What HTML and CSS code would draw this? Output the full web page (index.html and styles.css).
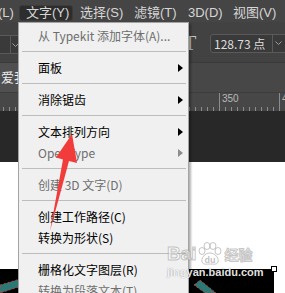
FILE: index.html
```html
<!DOCTYPE html>
<html lang="zh-CN">
<head>
    <meta charset="UTF-8">
    <meta name="viewport" content="width=device-width, initial-scale=1.0">
    <title>文字菜单</title>
    <link rel="stylesheet" href="styles.css">
</head>
<body>
    <div class="workspace">
        <!-- Application menu bar -->
        <div class="menubar">
            <span class="menubar-item">图层(L)</span>
            <span class="menubar-item open">文字(Y)</span>
            <span class="menubar-item">选择(S)</span>
            <span class="menubar-item">滤镜(T)</span>
            <span class="menubar-item short">3D(D)</span>
            <span class="menubar-item">视图(V)</span>
        </div>

        <!-- Tool options bar -->
        <div class="options-bar">
            <div class="combo style-combo">
                <div class="combo-field"></div>
                <div class="combo-drop">
                    <svg width="7" height="4" viewBox="0 0 7 4"><polyline points="0.5,0.5 3.5,3.5 6.5,0.5" fill="none" stroke="#9c9c9c"/></svg>
                </div>
            </div>
            <div class="size-group">
                <span class="size-icon">T</span>
                <div class="combo size-combo">
                    <div class="combo-field">128.73 点</div>
                    <div class="combo-drop">
                        <svg width="7" height="4" viewBox="0 0 7 4"><polyline points="0.5,0.5 3.5,3.5 6.5,0.5" fill="none" stroke="#9c9c9c"/></svg>
                    </div>
                </div>
            </div>
        </div>

        <!-- Document tabs -->
        <div class="doc-tabs">
            <div class="doc-tab active">爱我中华.psd @ 100%</div>
        </div>

        <!-- Horizontal ruler -->
        <div class="ruler">
            <span class="ruler-mark">150</span>
            <span class="ruler-mark">200</span>
            <span class="ruler-mark">250</span>
            <span class="ruler-mark">300</span>
            <span class="ruler-mark">350</span>
            <span class="ruler-mark">400</span>
        </div>

        <div class="pasteboard"></div>

        <div class="canvas">
            <div class="layer-image">
                <svg width="274" height="24" viewBox="0 0 274 24">
                    <polygon points="0,16 20,10 22,17 0,24" fill="#2b7874" stroke="#e33" stroke-width="0.8" stroke-dasharray="2 2"/>
                    <polygon points="194,16 200,11 216,24 205,24" fill="#2b7874" stroke="#e33" stroke-width="0.8" stroke-dasharray="2 2"/>
                </svg>
                <span class="handle"></span>
            </div>
        </div>

        <!-- Open "文字" menu -->
        <div class="dropdown">
            <div class="item disabled">从 Typekit 添加字体(A)...</div>
            <div class="sep"></div>
            <div class="item sub">面板</div>
            <div class="sep"></div>
            <div class="item sub">消除锯齿</div>
            <div class="sep"></div>
            <div class="item sub">文本排列方向</div>
            <div class="item sub disabled">OpenType</div>
            <div class="sep"></div>
            <div class="item disabled">创建 3D 文字(D)</div>
            <div class="sep"></div>
            <div class="item">创建工作路径(C)</div>
            <div class="item">转换为形状(S)</div>
            <div class="sep"></div>
            <div class="item">栅格化文字图层(R)</div>
            <div class="item disabled">转换为段落文本(T)</div>
        </div>

        <!-- Red annotation arrow -->
        <svg class="annotation" width="285" height="293" viewBox="0 0 285 293">
            <polygon points="72,134 77,163 69,161 50,231 63,159.5 56,157.5" fill="#f23b3b"/>
        </svg>

        <!-- Site watermark -->
        <div class="watermark">
            <div class="wm-logo">
                <span>Bai</span>
                <svg width="26" height="24" viewBox="0 0 26 24">
                    <g fill="rgba(255,255,255,0.5)" stroke="rgba(150,150,150,0.55)">
                        <ellipse cx="5" cy="9" rx="3" ry="3.5"/>
                        <ellipse cx="10" cy="4" rx="3" ry="3.5"/>
                        <ellipse cx="16" cy="4" rx="3" ry="3.5"/>
                        <ellipse cx="21" cy="9" rx="3" ry="3.5"/>
                        <path d="M13 11 C7 11 4 17 5 20 C6 23 10 22 13 22 C16 22 20 23 21 20 C22 17 19 11 13 11 Z"/>
                    </g>
                    <text x="13" y="21" text-anchor="middle" font-family="Liberation Sans" font-weight="bold" font-size="9" fill="rgba(150,150,150,0.6)">du</text>
                </svg>
                <span class="wm-cn">经验</span>
            </div>
            <div class="wm-url">jingyan.baidu.com</div>
        </div>
    </div>
</body>
</html>
```

FILE: styles.css
```css
/* Reset and base styles */
* {
    box-sizing: border-box;
    margin: 0;
    padding: 0;
}

body {
    width: 285px;
    height: 293px;
    overflow: hidden;
    font-family: "Noto Sans CJK SC", "Noto Sans", sans-serif;
    background-color: #fff;
}

.workspace {
    position: relative;
    width: 285px;
    height: 293px;
    overflow: hidden;
}

/* Menu bar */
.menubar {
    display: flex;
    height: 22px;
    margin-left: -35px;
    background-color: #454545;
}

.menubar-item {
    flex: 0 0 54px;
    height: 16px;
    margin-top: 5px;
    padding: 0 0 0 6px;
    font-family: "Liberation Sans", "Noto Sans CJK SC", sans-serif;
    font-size: 13px;
    line-height: 14px;
    color: #d6d6d6;
    white-space: nowrap;
    border: 1px solid transparent;
    border-radius: 3px;
}

.menubar-item.short {
    flex-basis: 45px;
}

.menubar-item.open {
    background-color: #2d2d2d;
    border-color: #3b3b3b;
}

/* Options bar */
.options-bar {
    display: flex;
    align-items: center;
    height: 40px;
    background-color: #424242;
}

.combo {
    display: flex;
    height: 19px;
    background-color: #3a3a3a;
    border: 1px solid #5a5a5a;
    border-radius: 3px;
}

.combo-field {
    font-size: 12px;
    line-height: 17px;
    color: #dedede;
    padding-left: 3px;
    white-space: nowrap;
}

.combo-drop {
    display: flex;
    align-items: center;
    justify-content: center;
    border-left: 1px solid #5a5a5a;
}

.style-combo {
    margin-left: -22px;
    margin-top: 5px;
}

.style-combo .combo-field {
    width: 31px;
}

.style-combo .combo-drop {
    width: 16px;
    padding-right: 6px;
}

.size-group {
    display: flex;
    align-items: center;
    margin-left: auto;
    margin-right: -10px;
    margin-top: 2px;
}

.size-icon {
    width: 16px;
    margin-right: 12px;
    font-family: "Liberation Serif", serif;
    font-size: 21px;
    line-height: 20px;
    color: #c4c4c4;
    text-align: center;
}

.size-combo .combo-field {
    width: 61px;
}

.size-combo .combo-drop {
    width: 22px;
    padding-right: 10px;
}

/* Document tabs */
.doc-tabs {
    display: flex;
    height: 30px;
    background-color: #474747;
    border-top: 1px solid #3a3a3a;
}

.doc-tab {
    width: 160px;
    padding: 4px 0 0 1px;
    font-size: 13px;
    line-height: 20px;
    color: #ececec;
    white-space: nowrap;
}

.doc-tab.active {
    background-color: #505050;
}

/* Ruler */
.ruler {
    display: flex;
    height: 19px;
    margin-left: -21px;
    background-color: #474747;
    background-image: repeating-linear-gradient(to right, #8c8c8c 0 1px, transparent 1px 6px);
    background-size: 100% 4px;
    background-position: 0 bottom;
    background-repeat: no-repeat;
    border-top: 1px solid #3d3d3d;
}

.ruler-mark {
    flex: 0 0 60px;
    padding: 1px 0 0 2px;
    font-family: "Liberation Sans", sans-serif;
    font-size: 10px;
    line-height: 10px;
    color: #b8b8b8;
    border-left: 1px solid #8c8c8c;
}

.pasteboard {
    height: 51px;
    background-color: #282828;
}

/* Canvas */
.canvas {
    height: 131px;
    padding-top: 107px;
    background-color: #fff;
}

.layer-image {
    position: relative;
    width: 274px;
    height: 24px;
    background-color: #000;
}

.layer-image svg {
    display: block;
}

.handle {
    position: absolute;
    top: -3px;
    right: -3px;
    width: 6px;
    height: 6px;
    background-color: #fff;
    border: 1px solid #000;
}

/* Dropdown menu */
.dropdown {
    position: absolute;
    left: 18px;
    top: 22px;
    width: 171px;
    height: 300px;
    padding-top: 2px;
    background-color: #f0f0f0;
    border: 1px solid #a3a3a3;
    box-shadow: 2px 2px 2px rgba(0, 0, 0, 0.3);
}

.dropdown .item {
    display: flex;
    align-items: center;
    justify-content: space-between;
    height: 21px;
    padding: 0 5px 0 19px;
    font-size: 12px;
    color: #000;
    white-space: nowrap;
}

.dropdown .item.disabled {
    color: #6e6e6e;
}

.dropdown .item.sub::after {
    content: "";
    border-left: 5px solid #000;
    border-top: 4.5px solid transparent;
    border-bottom: 4.5px solid transparent;
}

.dropdown .item.sub.disabled::after {
    border-left-color: #8c8c8c;
}

.dropdown .sep {
    height: 1px;
    margin: 5px 2px 5px 3px;
    background-color: #bdbdbd;
}

/* Overlays */
.annotation {
    position: absolute;
    left: 0;
    top: 0;
}

.watermark {
    position: absolute;
    left: 167px;
    top: 242px;
}

.wm-logo {
    display: flex;
    align-items: center;
    font-family: "Liberation Sans", sans-serif;
    font-weight: bold;
    font-size: 19px;
    color: rgba(255, 255, 255, 0.5);
    -webkit-text-stroke: 1px rgba(150, 150, 150, 0.55);
}

.wm-cn {
    font-family: "Noto Sans CJK SC", sans-serif;
    font-size: 14px;
    margin-left: 2px;
}

.wm-url {
    font-family: "Liberation Sans", sans-serif;
    font-weight: bold;
    font-size: 11px;
    color: rgba(255, 255, 255, 0.9);
    text-shadow: 0 0 1px rgba(0, 0, 0, 0.45);
}
```
